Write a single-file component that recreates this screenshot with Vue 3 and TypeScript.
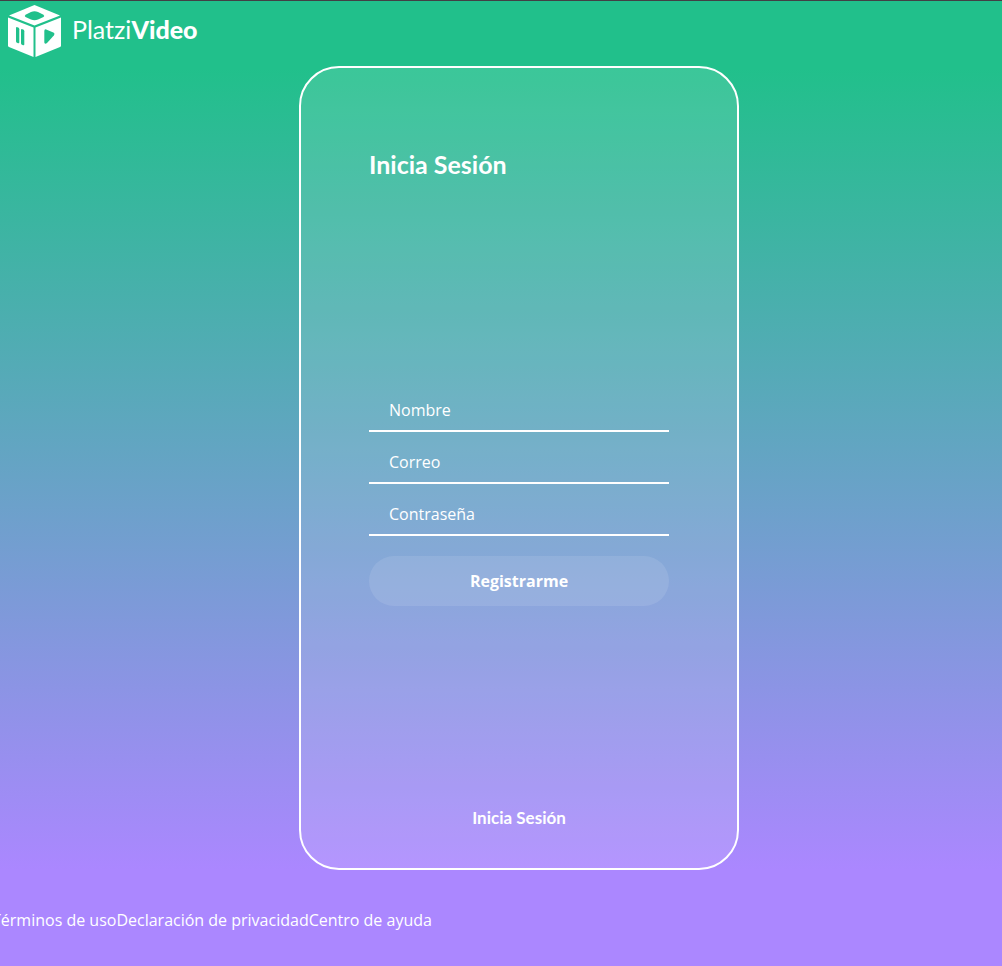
<script setup lang="ts">
import { ref } from 'vue'

interface Field {
  id: string
  label: string
  type: string
}

const fields: Field[] = [
  { id: 'name', label: 'Nombre', type: 'text' },
  { id: 'email', label: 'Correo', type: 'email' },
  { id: 'password', label: 'Contraseña', type: 'password' },
]
const values = ref<Record<string, string>>({ name: '', email: '', password: '' })
const links: string[] = ['Términos de uso', 'Declaración de privacidad', 'Centro de ayuda']
</script>

<template>
  <div class="page">
    <header class="header">
      <a class="brand" href="#" aria-label="Platzi Video">
        <svg class="cube" viewBox="0 0 56 54" aria-hidden="true">
          <path class="face" d="M27.5 1 53 11.5 27.5 21.5 2 11.5Z" />
          <path class="face" d="M1 13.5 26.5 23.5V53L2 43Q1 42.5 1 41.5Z" />
          <path class="face" d="M54 13.5 28.5 23.5V53L53 43Q54 42.5 54 41.5Z" />
          <path class="hole" d="M18.5 10.8 24 8Q27.5 6.4 31 8L36.5 10.8Q38 12 36.5 13L31 15.6Q27.5 17 24 15.6L18.5 13Q17 12 18.5 10.8Z" />
          <path class="hole" d="M9 24.2Q9 22.8 10.3 23.2L11.3 23.6Q12.3 24.1 12.3 25.3V38.2Q12.3 39.6 11 39.2L10 38.8Q9 38.3 9 37.2Z" />
          <path class="hole" d="M14 26.2Q14 24.8 15.3 25.2L16.3 25.6Q17.3 26.1 17.3 27.3V40.2Q17.3 41.6 16 41.2L15 40.8Q14 40.3 14 39.2Z" />
          <path class="hole" d="M37.3 27Q37.4 24.9 39.2 25.5L46.3 28.5Q48.3 29.6 46.8 31.5L40 38.9Q38 40.7 37.3 38.4Z" />
        </svg>
        <span class="word">Platzi<strong>Video</strong></span>
      </a>
    </header>
    <main class="main">
      <section class="card">
        <h1 class="title">Inicia Sesión</h1>
        <form class="form" @submit.prevent>
          <input
            v-for="field in fields"
            :id="field.id"
            :key="field.id"
            v-model="values[field.id]"
            class="field"
            :type="field.type"
            :placeholder="field.label"
            :aria-label="field.label"
          />
          <button class="submit" type="submit">Registrarme</button>
        </form>
        <a class="login" href="#">Inicia Sesión</a>
      </section>
    </main>
    <footer class="footer">
      <a v-for="link in links" :key="link" href="#">{{ link }}</a>
    </footer>
  </div>
</template>

<style>
body {
  margin: 0;
}
</style>

<style scoped>
.page {
  box-sizing: border-box;
  min-height: 100vh;
  display: flex;
  flex-direction: column;
  overflow: hidden;
  border-top: 1px solid #424045;
  background: linear-gradient(#21c08b 7%, #ab87ff 90%);
  color: #fff;
  font-family: "Open Sans", "Noto Sans", sans-serif;
  font-size: 16px;
}
.header {
  display: flex;
  padding: 3px 7px 0;
  height: 62px;
  box-sizing: border-box;
}
.brand {
  display: flex;
  gap: 9px;
  height: 54px;
  color: #fff;
  text-decoration: none;
}
.cube {
  width: 56px;
  height: 54px;
}
.face {
  fill: #fff;
}
.hole {
  fill: #21c08b;
}
.word {
  font-family: Lato, "Open Sans", sans-serif;
  font-size: 25px;
  line-height: 50px;
}
.word strong {
  font-weight: 900;
}
.main {
  flex: 1;
  display: flex;
  justify-content: center;
  padding: 3px 0 0 36px;
}
.card {
  box-sizing: border-box;
  width: 440px;
  min-height: 804px;
  display: flex;
  flex-direction: column;
  justify-content: space-between;
  padding: 80px 68px 40px;
  border: 2px solid #fff;
  border-radius: 40px;
  background: rgba(255, 255, 255, 0.12);
}
.title {
  margin: 0;
  font-family: Lato, "Open Sans", sans-serif;
  font-size: 25px;
  line-height: 32px;
  font-weight: 700;
}
.form {
  display: flex;
  flex-direction: column;
  padding-top: 8px;
}
.field {
  box-sizing: border-box;
  height: 42px;
  margin: 0 0 10px;
  padding: 0 20px;
  border: 0;
  border-bottom: 2px solid #fff;
  background: transparent;
  color: #fff;
  font: inherit;
  outline: none;
}
.field::placeholder {
  color: #fff;
  opacity: 1;
}
.submit {
  height: 50px;
  margin-top: 10px;
  border: 0;
  border-radius: 25px;
  background: rgba(255, 255, 255, 0.1);
  color: #fff;
  font: inherit;
  font-weight: 700;
}
.login {
  align-self: center;
  color: #fff;
  font-family: Lato, "Open Sans", sans-serif;
  font-size: 17px;
  font-weight: 700;
  line-height: 20px;
  text-decoration: none;
}
.footer {
  display: flex;
  height: 96px;
  margin-left: -8px;
  padding-top: 4px;
  box-sizing: border-box;
  align-items: center;
}
.footer a {
  color: #fff;
  text-decoration: none;
  white-space: nowrap;
}
</style>
